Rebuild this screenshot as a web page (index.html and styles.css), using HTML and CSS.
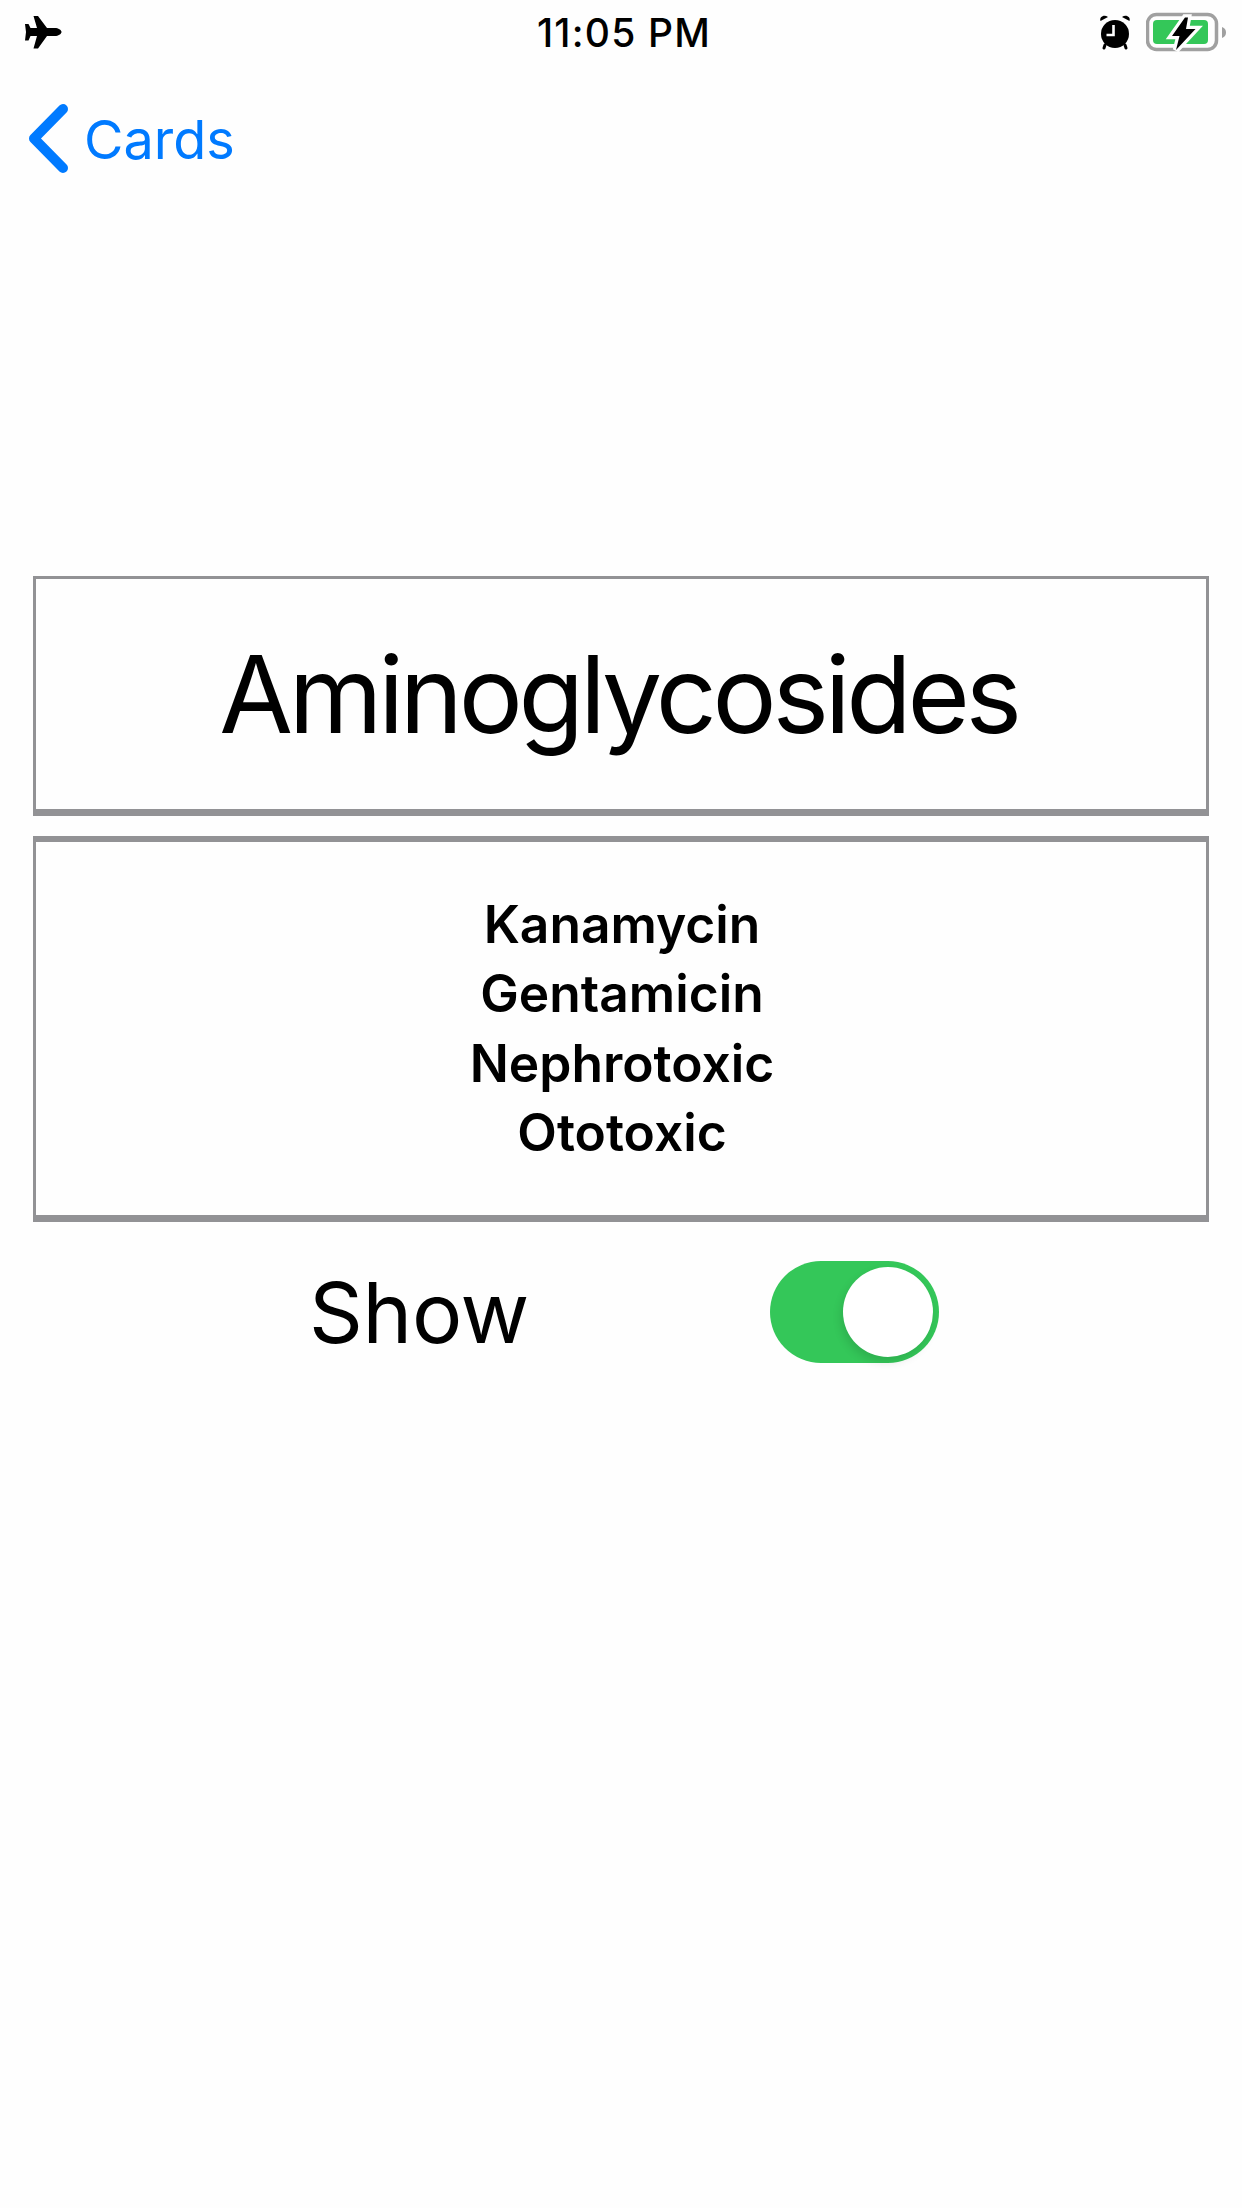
FILE: index.html
```html
<!DOCTYPE html>
<html lang="en">
<head>
<meta charset="utf-8">
<title>Cards</title>
<link rel="stylesheet" href="styles.css">
</head>
<body>
<div class="status">
  <div class="status-left">
    <svg class="plane" viewBox="24 14 38 35" width="38" height="35"><path d="M61.500 31C61.500 29 58 27 55 27H47L38 15H33.500L37 27H30.500L28.500 23H25L26 31L25 39.500H28.500L30.500 35H37L33.500 47.500H38L47 35H55C58 35 61.500 33 61.500 31Z"/></svg>
  </div>
  <div class="time">11:05 PM</div>
  <div class="status-right">
    <svg class="alarm" viewBox="1098 13 34 37" width="34" height="37">
      <circle cx="1115" cy="33" r="14"/>
      <path d="M1100.500 20C1099 16 1104 13 1108 16ZM1129.500 20C1131 16 1126 13 1122 16Z"/>
      <path d="M1105 44L1104 47M1125 44L1126 47" stroke="#000" stroke-width="3" stroke-linecap="round"/>
      <path d="M1113.500 24V34H1106.500" fill="none" stroke="#fff" stroke-width="2.600"/>
    </svg>
    <svg class="battery" viewBox="1146 12 81 40" width="81" height="40">
      <rect x="1147.500" y="14.500" width="69" height="35" rx="9" fill="none" stroke="#a0a0a0" stroke-width="3.500"/>
      <rect x="1153" y="20" width="55" height="24" rx="4" fill="#34c759"/>
      <path d="M1222 27C1225 28 1226 30 1226 32.500C1226 35 1225 37 1222 38Z" fill="#a0a0a0"/>
      <path d="M1185 17.500L1172 36H1179.500L1176 50L1195.500 29H1186L1188 17.500Z" fill="#000" stroke="#fefefe" stroke-width="6.500" paint-order="stroke" stroke-linejoin="miter"/>
    </svg>
  </div>
</div>
<nav class="nav">
  <svg class="chevron" viewBox="0 0 42 70" width="42" height="70"><path d="M36 5L7 34.500L36 64" fill="none" stroke="#007aff" stroke-width="10" stroke-linecap="round" stroke-linejoin="round"/></svg>
  <span class="back">Cards</span>
</nav>
<main class="content">
  <section class="card card-title">Aminoglycosides</section>
  <section class="card card-body">
    <div>Kanamycin</div>
    <div>Gentamicin</div>
    <div>Nephrotoxic</div>
    <div>Ototoxic</div>
  </section>
  <div class="toggle-row">
    <span class="toggle-label">Show</span>
    <div class="switch"><div class="thumb"></div></div>
  </div>
</main>
</body>
</html>
```
FILE: styles.css
```css
* { box-sizing: border-box; }
html, body { margin: 0; padding: 0; }
body {
  width: 1242px;
  height: 2208px;
  background: #fefefe;
  color: #000;
  font-family: Inter, "Liberation Sans", sans-serif;
  overflow: hidden;
}
.status {
  display: grid;
  grid-template-columns: 1fr auto 1fr;
  align-items: center;
  height: 64px;
  padding: 0 15px 0 24px;
}
.status-left { display: flex; align-items: center; }
.plane { display: block; }
.time { padding-right: 3px; font-size: 39px; font-weight: 500; letter-spacing: 1.200px; }
.status-right { display: flex; justify-content: flex-end; align-items: center; gap: 14px; }
.alarm, .battery { display: block; }
.nav {
  display: flex;
  align-items: center;
  height: 70px;
  margin-top: 40px;
  padding-left: 27px;
  gap: 15px;
  color: #007aff;
}
.chevron { display: block; }
.back { font-size: 54px; }
.content {
  display: flex;
  flex-direction: column;
  margin-top: 402px;
  padding: 0 33px;
}
.card {
  display: flex;
  flex-direction: column;
  align-items: center;
  justify-content: center;
  text-align: center;
  width: 1176px;
  border: 3px solid #929295;
}
.card-title {
  height: 240px;
  padding: 0 5px 0 0;
  border-bottom-width: 7px;
  font-size: 107px;
  font-weight: 400;
  letter-spacing: -4.300px;
}
.card-body {
  height: 386px;
  margin-top: 20px;
  padding-left: 2px;
  border-top-width: 6px;
  border-bottom-width: 7px;
  font-size: 51.500px;
  font-weight: 600;
  line-height: 69.500px;
}
.toggle-row {
  display: flex;
  align-items: center;
  margin-top: 39px;
  padding-left: 276px;
}
.toggle-label {
  width: 461px;
  font-size: 84px;
  letter-spacing: -0.300px;
}
.switch {
  display: flex;
  justify-content: flex-end;
  align-items: center;
  width: 169px;
  height: 102px;
  padding-right: 6px;
  border-radius: 51px;
  background: #34c759;
}
.thumb {
  width: 90px;
  height: 90px;
  border-radius: 50%;
  background: #fff;
  box-shadow: -2px 5px 10px rgba(0, 0, 0, 0.12);
}
```
